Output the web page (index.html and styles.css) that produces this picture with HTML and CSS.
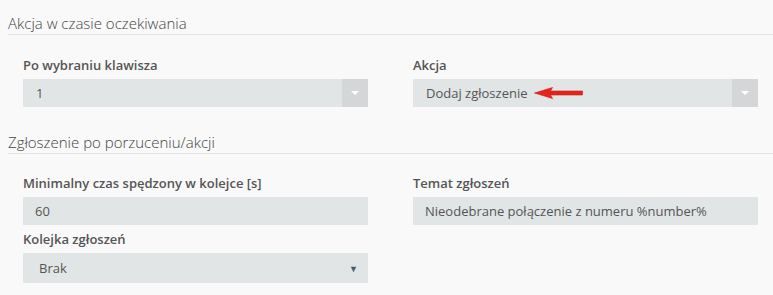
FILE: index.html
```html
<!DOCTYPE html>
<html lang="pl">
<head>
  <meta charset="UTF-8">
  <title>Akcja w czasie oczekiwania</title>
  <link rel="stylesheet" href="styles.css">
</head>
<body>
<div class="panel">
  <h3 class="section-title">Akcja w czasie oczekiwania</h3>
  <div class="form-row">
    <div class="field">
      <label>Po wybraniu klawisza</label>
      <div class="combo">
        <span class="combo-value">1</span>
        <span class="combo-btn"><span class="caret"></span></span>
      </div>
    </div>
    <div class="field">
      <label>Akcja</label>
      <div class="combo">
        <span class="combo-value">Dodaj zgłoszenie
          <svg class="pointer" width="50" height="12" viewBox="0 0 50 12">
            <path d="M0.5 6 L18.5 0.5 L16.5 4 L48.5 4 L48.5 8 L16.5 8 L18.5 11.5 Z" fill="#e8231b" stroke="#c81a14" stroke-width="0.6" stroke-linejoin="round"/>
          </svg>
        </span>
        <span class="combo-btn"><span class="caret"></span></span>
      </div>
    </div>
  </div>

  <h3 class="section-title second">Zgłoszenie po porzuceniu/akcji</h3>
  <div class="form-row">
    <div class="field">
      <label>Minimalny czas spędzony w kolejce [s]</label>
      <div class="input">60</div>
      <label class="next">Kolejka zgłoszeń</label>
      <div class="select">
        <span>Brak</span>
        <span class="select-arrow">▼</span>
      </div>
    </div>
    <div class="field">
      <label>Temat zgłoszeń</label>
      <div class="input">Nieodebrane połączenie z numeru %number%</div>
    </div>
  </div>
</div>
</body>
</html>
```

FILE: styles.css
```css
body {
    margin: 0;
    padding: 0;
    background-color: #f9f9f9;
    font-family: "Open Sans", Arial, sans-serif;
    color: #555;
}

.panel {
    padding: 12px 0 0 8px;
}

.section-title {
    margin: 0 0 21px 0;
    font-size: 15px;
    font-weight: 300;
    line-height: 22px;
    color: #444;
    border-bottom: 1px solid #e3e3e3;
}

.section-title.second {
    margin-top: 24px;
    margin-bottom: 20px;
}

.form-row {
    display: grid;
    grid-template-columns: 345px 345px;
    column-gap: 45px;
    padding: 0 15px;
}

label {
    display: block;
    font-size: 13px;
    font-weight: 600;
    line-height: 18px;
    margin-bottom: 5px;
    color: #555;
}

label.next {
    margin-top: 5px;
}

.combo {
    display: flex;
    height: 28px;
    background-color: #e2e5e6;
}

.combo-value {
    flex: 1;
    display: flex;
    align-items: center;
    padding-left: 13px;
    font-size: 13px;
}

.pointer {
    margin-left: 6px;
}

.combo-btn {
    width: 26px;
    display: flex;
    align-items: center;
    justify-content: center;
    background-color: #d4d6d7;
}

.caret {
    width: 0;
    height: 0;
    border-left: 4px solid transparent;
    border-right: 4px solid transparent;
    border-top: 4px solid #fff;
}

.input {
    height: 28px;
    line-height: 28px;
    padding-left: 12px;
    font-size: 13px;
    background-color: #e2e5e6;
}

.select {
    display: flex;
    justify-content: space-between;
    align-items: center;
    height: 30px;
    padding: 0 10px 0 16px;
    font-size: 13px;
    background-color: #e2e5e6;
}

.select-arrow {
    font-size: 9px;
    color: #4c5963;
}
```
